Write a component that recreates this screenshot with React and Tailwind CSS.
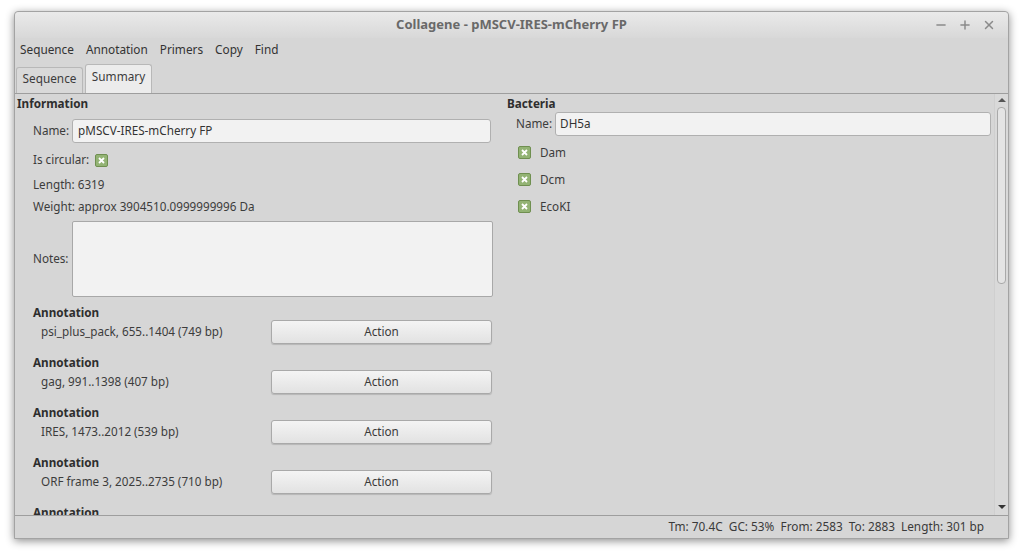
import { Minus, Plus, X } from "lucide-react";

const annotations = [
  "psi_plus_pack, 655..1404 (749 bp)",
  "gag, 991..1398 (407 bp)",
  "IRES, 1473..2012 (539 bp)",
  "ORF frame 3, 2025..2735 (710 bp)",
];

function Check() {
  return (
    <span className="flex items-center justify-center w-[13px] h-[13px] rounded-[2px] border border-[#6f8f50] bg-[#93b374]">
      <svg width="7" height="7" viewBox="0 0 7 7">
        <path d="M1 1L6 6M6 1L1 6" stroke="#ffffff" strokeWidth="1.8" />
      </svg>
    </span>
  );
}

function AnnotationBlock({ text, last }) {
  return (
    <div className="flex h-[50px] shrink-0">
      <div className="flex flex-col w-[238px]">
        <div className="h-[18px] flex items-center font-bold text-[#2e2e2e]">Annotation</div>
        <div className="h-[20px] flex items-center pl-2">{text}</div>
      </div>
      <button className="mt-[16px] w-[221px] h-[24px] rounded-[3px] border border-[#a9a9a9] bg-gradient-to-b from-[#f4f4f4] to-[#e2e2e2] shadow-[0_1px_1px_rgba(0,0,0,0.15)] text-[#3a3a3a]">
        {last ? "" : "Action"}
      </button>
    </div>
  );
}

export default function App() {
  return (
    <div className="w-[1024px] h-[556px] bg-white pt-[11px] pl-[14px] text-[11.7px] text-[#3c3c3c] font-['Noto_Sans',sans-serif] overflow-hidden">
      <div className="w-[995px] h-[528px] flex flex-col bg-[#d6d6d6] border border-[#a3a3a3] rounded-t-[4px] shadow-[0_2px_8px_rgba(0,0,0,0.45)]">
        <div className="h-[26px] shrink-0 relative flex items-center justify-center rounded-t-[4px] bg-gradient-to-b from-[#eaeaea] to-[#d8d8d8]">
          <span className="font-bold text-[13px] text-[#696969]">Collagene - pMSCV-IRES-mCherry FP</span>
          <div className="absolute right-[12px] top-[6px] flex gap-[10px] text-[#8a8a8a]">
            <Minus size={14} strokeWidth={2.5} />
            <Plus size={14} strokeWidth={2.5} />
            <X size={14} strokeWidth={2.5} />
          </div>
        </div>
        <div className="h-[24px] shrink-0 flex items-center gap-[12px] pl-[5px] text-[11.8px] text-[#333]">
          <span>Sequence</span>
          <span>Annotation</span>
          <span>Primers</span>
          <span>Copy</span>
          <span>Find</span>
        </div>
        <div className="h-[31px] shrink-0 flex items-end pl-[1px] gap-[2px] text-[11.8px]">
          <div className="h-[26px] w-[67px] pb-[4px] flex items-center justify-center border border-b-0 border-[#b8b8b8] rounded-t-[3px] bg-[#d9d9d9]">Sequence</div>
          <div className="h-[29px] w-[67px] pb-[4px] flex items-center justify-center border border-b-0 border-[#b8b8b8] rounded-t-[3px] bg-[#ececec]">Summary</div>
        </div>
        <div className="flex-1 min-h-0 flex border-t border-b border-[#9e9e9e] overflow-hidden">
          <div className="w-[485px] shrink-0 flex flex-col">
            <div className="h-[18px] shrink-0 flex items-center pl-[2px] pt-[1px] font-bold text-[#2e2e2e]">Information</div>
            <div className="pl-[18px] flex flex-col">
              <div className="mt-[7px] flex items-center gap-[3px]">
                <span>Name:</span>
                <div className="w-[419px] h-[24px] flex items-center px-[5px] rounded-[3px] border border-[#b0b0b0] bg-[#f2f2f2] text-[#333]">pMSCV-IRES-mCherry FP</div>
              </div>
              <div className="mt-[7px] h-[20px] flex items-center gap-[6px]">
                <span>Is circular:</span>
                <Check />
              </div>
              <div className="mt-[5px] h-[20px] flex items-center">Length: 6319</div>
              <div className="mt-[2px] h-[20px] flex items-center">Weight: approx 3904510.0999999996 Da</div>
              <div className="mt-[4px] flex items-center gap-[3px]">
                <span>Notes:</span>
                <div className="w-[421px] h-[76px] rounded-[2px] border border-[#a8a8a8] bg-[#f2f2f2]"></div>
              </div>
              <div className="mt-[7px] flex flex-col">
                {annotations.map((a) => (
                  <AnnotationBlock key={a} text={a} />
                ))}
                <AnnotationBlock text="" last />
              </div>
            </div>
          </div>
          <div className="flex-1 flex flex-col">
            <div className="h-[18px] shrink-0 flex items-center pl-[7px] pt-[1px] font-bold text-[#2e2e2e]">Bacteria</div>
            <div className="pl-[16px] pr-[3px] flex items-center gap-[3px]">
              <span>Name:</span>
              <div className="flex-1 h-[24px] flex items-center px-[4px] rounded-[3px] border border-[#b0b0b0] bg-[#f2f2f2] text-[#333]">DH5a</div>
            </div>
            <div className="pl-[18px] mt-[3px] flex flex-col">
              {["Dam", "Dcm", "EcoKI"].map((b) => (
                <div key={b} className="h-[27px] flex items-center gap-[9px]">
                  <Check />
                  <span>{b}</span>
                </div>
              ))}
            </div>
          </div>
          <div className="w-[14px] shrink-0 flex flex-col items-center border-l border-[#cfcfcf] bg-[#d9d9d9]">
            <span className="mt-[4px] w-0 h-0 border-l-[4px] border-r-[4px] border-b-[4px] border-l-transparent border-r-transparent border-b-[#555]"></span>
            <div className="mt-[5px] w-[9px] h-[177px] rounded-[4px] border border-[#a9a9a9] bg-[#e4e4e4]"></div>
            <div className="flex-1"></div>
            <span className="mb-[6px] w-0 h-0 border-l-[4px] border-r-[4px] border-t-[4px] border-l-transparent border-r-transparent border-t-[#333]"></span>
          </div>
        </div>
        <div className="h-[22px] shrink-0 flex items-center justify-end pr-[24px] text-[11.8px] text-[#3a3a3a]">
          <span>Tm: 70.4C&nbsp;&nbsp;GC: 53%&nbsp;&nbsp;From: 2583&nbsp;&nbsp;To: 2883&nbsp;&nbsp;Length: 301 bp</span>
        </div>
      </div>
    </div>
  );
}
